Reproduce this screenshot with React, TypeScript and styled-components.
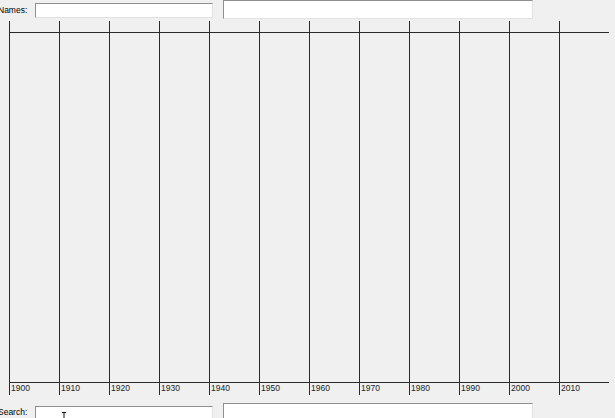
import React from 'react';
import styled, { createGlobalStyle } from 'styled-components';

const GlobalStyle = createGlobalStyle`
	html, body {
		margin: 0;
		padding: 0;
		background: #f0f0f0;
		overflow: hidden;
	}
`;

const Page = styled.div`
	width: 615px;
	height: 418px;
	display: flex;
	flex-direction: column;
	background: #f0f0f0;
	font-family: "Liberation Sans", Arial, sans-serif;
	overflow: hidden;
`;

const Bar = styled.div<{ $height: number }>`
	height: ${(p) => p.$height}px;
	flex: none;
	display: flex;
	align-items: flex-start;
`;

const Label = styled.div<{ $top: number }>`
	width: 37px;
	margin-left: -2px;
	padding-top: ${(p) => p.$top}px;
	font-size: 8.5px;
	line-height: 10px;
	color: #000;
	white-space: nowrap;
`;

const Field = styled.div<{ $width: number; $height: number; $top: number; $gap?: number }>`
	position: relative;
	box-sizing: border-box;
	width: ${(p) => p.$width}px;
	height: ${(p) => p.$height}px;
	margin-top: ${(p) => p.$top}px;
	margin-left: ${(p) => p.$gap || 0}px;
	background: #fff;
	border: 1px solid;
	border-color: #8e8e8e #e2e2e2 #e2e2e2 #8e8e8e;
`;

const Cursor = styled.svg`
	position: absolute;
	left: 25px;
	top: 5px;
`;

const Chart = styled.svg`
	display: block;
	flex: none;
`;

const years = Array.from({ length: 12 }, (_, i) => 1900 + i * 10);

function Timeline() {
	const top = 20;
	return (
		<Chart width={615} height={375} viewBox={`0 ${top} 615 375`}>
			<line x1={9} y1={32.5} x2={609} y2={32.5} stroke="#2a2a2a" strokeWidth={1} />
			<line x1={9} y1={382.5} x2={609} y2={382.5} stroke="#2a2a2a" strokeWidth={1} />
			{years.map((year, i) => {
				const x = 9.5 + i * 50;
				return (
					<g key={year}>
						<line x1={x} y1={21} x2={x} y2={395} stroke="#2a2a2a" strokeWidth={1} />
						<text
							x={x + 1.5}
							y={390.5}
							fontSize={8.5}
							fontFamily='"Liberation Sans", Arial, sans-serif'
							fill="#222"
						>
							{year}
						</text>
					</g>
				);
			})}
		</Chart>
	);
}

export default function App() {
	return (
		<Page>
			<GlobalStyle />
			<Bar $height={20}>
				<Label $top={5}>Names:</Label>
				<Field $width={178} $height={15} $top={3} />
				<Field $width={310} $height={19} $top={0} $gap={10} />
			</Bar>
			<Timeline />
			<Bar $height={23}>
				<Label $top={12}>Search:</Label>
				<Field $width={178} $height={15} $top={11}>
					<Cursor width={6} height={9} viewBox="0 0 6 9">
						<path d="M1 0.5h4M3 0.5v8M1 8.5h4" stroke="#111" strokeWidth={1} fill="none" />
					</Cursor>
				</Field>
				<Field $width={310} $height={19} $top={8} $gap={10} />
			</Bar>
		</Page>
	);
}
